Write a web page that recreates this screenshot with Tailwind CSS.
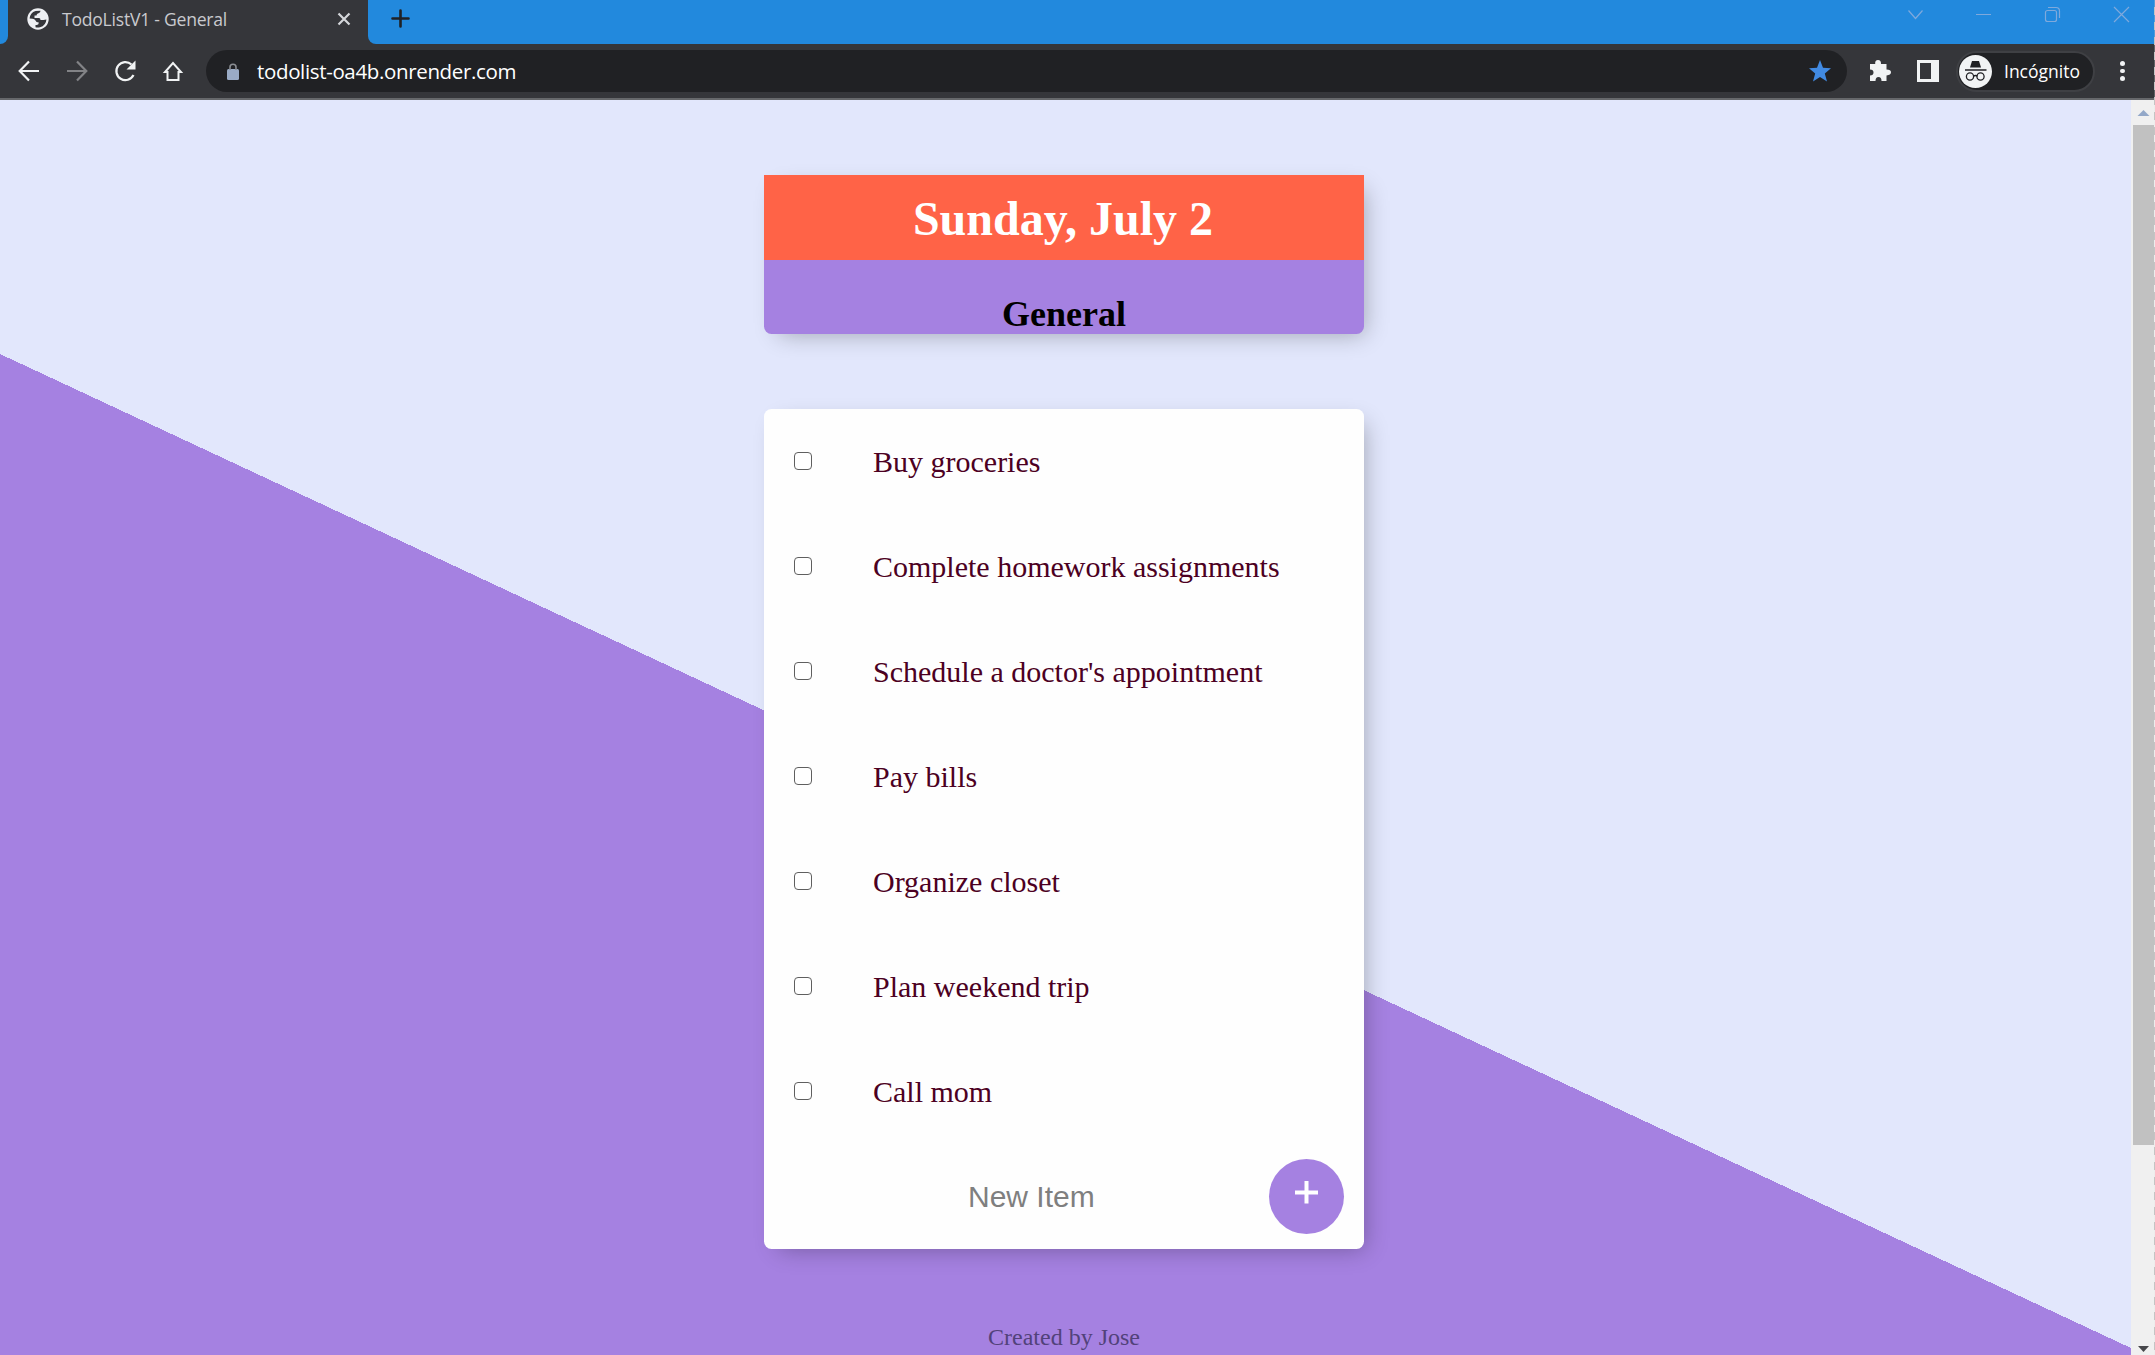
<!DOCTYPE html>
<html lang="es">
<head>
<meta charset="utf-8">
<title>TodoListV1 - General</title>
<script src="https://cdn.jsdelivr.net/npm/@tailwindcss/browser@4"></script>
</head>
<body class="relative flex h-[1355px] w-[2155px] flex-col overflow-hidden">
<!-- tab strip -->
<header class="flex h-11 shrink-0 items-start bg-[#2289dd] font-['Open_Sans',sans-serif]">
  <div class="flex h-11 w-2 bg-[#35363a]"><div class="h-11 w-2 rounded-br-[8px] bg-[#2289dd]"></div></div>
  <div class="flex h-11 w-[360px] items-center bg-[#35363a] pr-[17px] pl-[19px] pb-[6px]">
    <svg class="h-[22px] w-[22px]" viewBox="0 0 22 22"><circle cx="11" cy="11" r="10.7" fill="#eef0f3"/><path d="M2.600 10.500Q3.200 4.600 8.500 3L13.500 2.800Q13.600 4.800 11.500 5.200Q9.500 5.500 9.500 7.500H7.500V10H12Q13.500 10.200 13.500 12H16.500Q18 11.800 19.400 11.500Q19 17.500 13 19.300Q10 19.800 8.500 19.200V17H10Q11.800 16.800 11.800 14.500Q9 14.500 8.500 12.500Q7.500 10.800 5.500 10.800Z" fill="#35363a"/></svg>
    <span class="ml-[13px] w-[270px] text-[17.600px] leading-6 tracking-[-0.250px] whitespace-nowrap text-[#c9cace]">TodoListV1 - General</span>
    <svg class="ml-auto h-[14px] w-[14px]" viewBox="0 0 14 14"><path d="M1.500 1.500L12.500 12.500M12.500 1.500L1.500 12.500" stroke="#d5d7da" stroke-width="2.200"/></svg>
  </div>
  <div class="h-11 w-2 bg-[#35363a]"><div class="h-11 w-2 rounded-bl-[8px] bg-[#2289dd]"></div></div>
  <svg class="mt-[9px] ml-[15px] h-[19px] w-[19px]" viewBox="0 0 19 19"><path d="M9.500 1.500V17.500M1.500 9.500H17.500" stroke="#202124" stroke-width="2.600" stroke-linecap="round"/></svg>
  <div class="mt-[6px] ml-auto flex w-[247px] items-center">
    <svg class="h-[17px] w-[222px]" viewBox="0 0 222 17" fill="none" stroke="#7fa9dc" stroke-width="1.200"><path d="M.500 4.500L7.500 12.500L14.500 4.500M68 8.500H83M206 1L221 16M221 1L206 16"/><rect x="137.500" y="4.500" width="11" height="11" rx="2"/><path d="M140 1.500H148Q151.500 1.500 151.500 5V12"/></svg>
  </div>
</header>
<!-- toolbar -->
<nav class="flex h-14 shrink-0 items-center border-b-2 border-[#66686b] bg-[#35363a] font-['Open_Sans',sans-serif]">
  <svg class="ml-[18px] h-6 w-[174px]" viewBox="0 0 174 24" fill="none" stroke="#f1f3f4" stroke-width="2.200"><path d="M21 12H2M11 2.500L1.700 12L11 21.500"/><path stroke="#828386" d="M49 12H68M59 2.500L68.300 12L59 21.500"/><path d="M115.500 16A9 9 0 1 1 113.500 5.500"/><path d="M117.500 1.500V10.500H108.500Z" fill="#f1f3f4" stroke="none"/><path d="M149.500 21V13H147L155 4L163 13H160.500V21Z" stroke-width="2"/></svg>
  <div class="ml-[14px] flex h-[42px] w-[1641px] items-center rounded-full bg-[#202124] pr-4 pl-[21px]">
    <svg class="h-[17px] w-[12px]" viewBox="0 0 12 17"><rect y="6" width="12" height="11" rx="1.500" fill="#9aabc6"/><path d="M3 7V4Q3 1.200 6 1.200T9 4V7" fill="none" stroke="#8a8d92" stroke-width="1.600"/></svg>
    <span class="ml-[18px] text-[20.500px] leading-7 tracking-[-0.350px] whitespace-nowrap text-white">todolist-oa4b.onrender.com</span>
    <svg class="ml-auto h-[22px] w-[22px]" viewBox="0 0 22 22"><path d="M11 0L14 7.800L22 8.300L15.800 13.500L18 21.500L11 17L4 21.500L6.200 13.500L0 8.300L8 7.800Z" fill="#418ae2"/></svg>
  </div>
  <svg class="ml-[22px] h-[22px] w-[22px]" viewBox="0 0 22 22"><path d="M1 4H6.200Q5.800 0 9 0T12 4H17.500V9.500Q22 9.500 22 12.300T17.500 15.500V21H12.500Q12.500 17 9.500 17T6.500 21H1V15.500Q4.500 15.500 4.500 12.500T1 9.500Z" fill="#f1f3f4"/></svg>
  <svg class="ml-[26px] h-[22px] w-[22px]" viewBox="0 0 22 22"><rect width="22" height="22" fill="#f1f3f4"/><rect x="3" y="3" width="11" height="16" fill="#35363a"/></svg>
  <div class="ml-[17px] flex h-[41px] w-[139px] items-center rounded-full border-2 border-[#3f4044] bg-[#202124] pl-px">
    <svg class="h-[33px] w-[33px]" viewBox="0 0 33 33"><circle cx="16.500" cy="16.500" r="16.500" fill="#f1f3f4"/><path d="M11 12.500L13 6H20L22 12.500Z" fill="#202124"/><path d="M6 15H27.500M14.500 21Q16.500 20 18.500 21" stroke="#202124" stroke-width="1.400" fill="none"/><circle cx="11" cy="21.500" r="3.600" fill="none" stroke="#202124" stroke-width="1.300"/><circle cx="21.500" cy="21.500" r="3.600" fill="none" stroke="#202124" stroke-width="1.300"/></svg>
    <span class="ml-3 text-[17.500px] leading-6 text-white">Incógnito</span>
  </div>
  <div class="ml-[25px] flex flex-col gap-[3px]"><i class="size-[4.500px] rounded-full bg-[#f1f3f4]"></i><i class="size-[4.500px] rounded-full bg-[#f1f3f4]"></i><i class="size-[4.500px] rounded-full bg-[#f1f3f4]"></i></div>
</nav>
<div class="flex h-[1255px]">
  <main class="relative flex w-[2131px] flex-col items-center bg-[#e2e7fc] pr-[3px] font-['Liberation_Serif',serif]">
    <svg class="absolute top-0 left-0 h-[1255px] w-[2131px]" viewBox="0 0 2131 1255" shape-rendering="crispEdges"><path d="M0 254L2131 1248V1255H0Z" fill="#a581e1"/></svg>
    <section class="relative mt-[75px] h-[159px] w-[600px] rounded-b-[7.500px] bg-[#a581e1] text-center shadow-[7.500px_7.500px_22.500px_-7.500px_rgba(0,0,0,0.3)]">
      <h1 class="h-[85px] bg-[#ff6347] pr-[2px] text-[48px] leading-[88px] font-bold text-white">Sunday, July 2</h1>
      <h2 class="pt-[34px] text-[36px] leading-[41px] font-bold text-black">General</h2>
    </section>
    <section class="relative mt-[75px] flex h-[840px] w-[600px] flex-col rounded-[7.500px] bg-[#fefefe] text-[30px] text-[#4c0022] shadow-[7.500px_7.500px_22.500px_-7.500px_rgba(0,0,0,0.3)]">
      <label class="flex h-[105px] items-center pl-[30px]"><i class="mt-[-1px] size-[18px] rounded-[4px] border-[1.500px] border-[#5f5f5f] bg-white"></i><span class="ml-[61px]">Buy groceries</span></label>
      <label class="flex h-[105px] items-center pl-[30px]"><i class="mt-[-1px] size-[18px] rounded-[4px] border-[1.500px] border-[#5f5f5f] bg-white"></i><span class="ml-[61px]">Complete homework assignments</span></label>
      <label class="flex h-[105px] items-center pl-[30px]"><i class="mt-[-1px] size-[18px] rounded-[4px] border-[1.500px] border-[#5f5f5f] bg-white"></i><span class="ml-[61px]">Schedule a doctor's appointment</span></label>
      <label class="flex h-[105px] items-center pl-[30px]"><i class="mt-[-1px] size-[18px] rounded-[4px] border-[1.500px] border-[#5f5f5f] bg-white"></i><span class="ml-[61px]">Pay bills</span></label>
      <label class="flex h-[105px] items-center pl-[30px]"><i class="mt-[-1px] size-[18px] rounded-[4px] border-[1.500px] border-[#5f5f5f] bg-white"></i><span class="ml-[61px]">Organize closet</span></label>
      <label class="flex h-[105px] items-center pl-[30px]"><i class="mt-[-1px] size-[18px] rounded-[4px] border-[1.500px] border-[#5f5f5f] bg-white"></i><span class="ml-[61px]">Plan weekend trip</span></label>
      <label class="flex h-[105px] items-center pl-[30px]"><i class="mt-[-1px] size-[18px] rounded-[4px] border-[1.500px] border-[#5f5f5f] bg-white"></i><span class="ml-[61px]">Call mom</span></label>
      <div class="flex h-[105px] items-center">
        <span class="ml-[204px] font-['Liberation_Sans',sans-serif] text-[30px] text-[#7f7f7f]">New Item</span>
        <div class="mr-5 ml-auto flex size-[75px] justify-center rounded-full bg-[#a581e1]"><svg class="mt-[22px] h-[23px] w-[23px]" viewBox="0 0 23 23"><path d="M11.500 0V22.500M0 11.500H23" stroke="#fff" stroke-width="4"/></svg></div>
      </div>
    </section>
    <footer class="relative mt-[74px] text-[24px] leading-7 text-[#52427a]">Created by Jose</footer>
  </main>
  <aside class="flex w-[23px] flex-col items-center bg-[#f0f0f0] pl-[2px]">
    <svg class="h-[25px] w-[21px]" viewBox="0 0 21 25"><path d="M4.500 16L10.500 10L16.500 16Z" fill="#93a8c8"/></svg>
    <div class="h-[1020px] w-[21px] bg-[#c1c1c1]"></div>
    <svg class="mt-auto h-[12px] w-[21px]" viewBox="0 0 21 12"><path d="M5 3H16L10.500 9Z" fill="#47474b"/></svg>
  </aside>
</div>
<div class="absolute top-0 right-0 h-full w-px bg-[repeating-linear-gradient(to_bottom,#c4c4c450_0px,#c4c4c450_7px,#c4c4c4_7px,#c4c4c4_15px)]"></div>
</body>
</html>
